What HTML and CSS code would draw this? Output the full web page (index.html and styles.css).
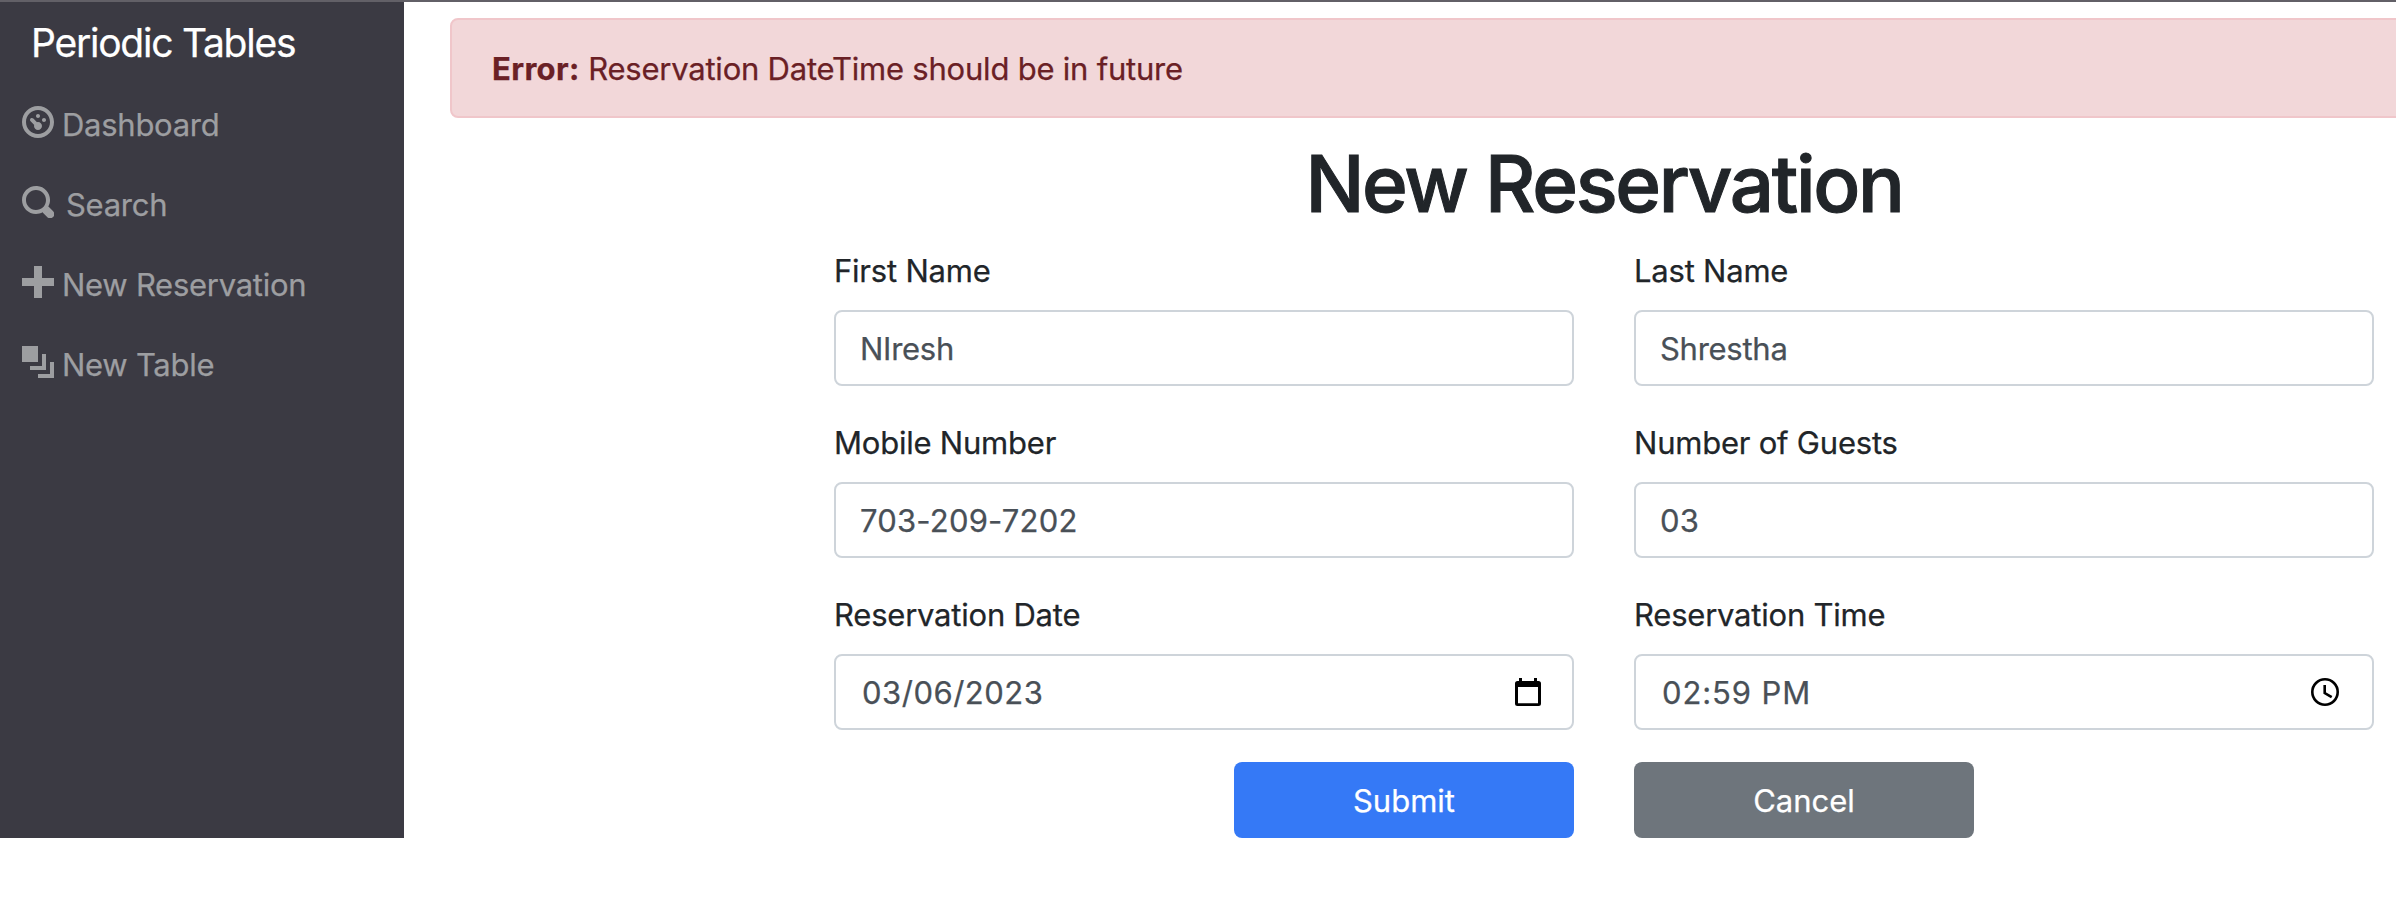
FILE: index.html
```html
<!DOCTYPE html>
<html lang="en">
<head>
<meta charset="utf-8">
<title>Periodic Tables</title>
<link rel="stylesheet" href="styles.css">
</head>
<body>
<div class="layout">
  <nav class="sidebar">
    <div class="brand">Periodic Tables</div>
    <a class="nav-link"><svg class="icon" viewBox="0 0 8 8"><path d="M4 0c-2.2 0-4 1.8-4 4s1.8 4 4 4 4-1.8 4-4-1.8-4-4-4zm0 1c1.66 0 3 1.34 3 3s-1.34 3-3 3-3-1.34-3-3 1.34-3 3-3zm0 1c-.28 0-.5.22-.5.5s.22.5.5.5.5-.22.5-.5-.22-.5-.5-.5zm-1.66 1a.5.5 0 0 0-.19.84l.91.91c-.02.08-.06.16-.06.25 0 .55.45 1 1 1s1-.45 1-1-.45-1-1-1c-.09 0-.17.04-.25.06l-.91-.91a.5.5 0 0 0-.44-.16.5.5 0 0 0-.06 0zm3.16 0c-.28 0-.5.22-.5.5s.22.5.5.5.5-.22.5-.5-.22-.5-.5-.5z"/></svg><span class="nav-text">Dashboard</span></a>
    <a class="nav-link"><svg class="icon" viewBox="0 0 8 8"><path d="M3.5 0c-1.93 0-3.5 1.57-3.5 3.5s1.57 3.5 3.5 3.5c.59 0 1.17-.14 1.66-.41a1 1 0 0 0 .13.13l1 1a1.02 1.02 0 1 0 1.44-1.44l-1-1a1 1 0 0 0-.16-.13c.27-.49.44-1.06.44-1.66 0-1.93-1.55-3.5-3.5-3.5zm0 1c1.39 0 2.5 1.11 2.5 2.5 0 .66-.24 1.27-.66 1.72-.01.01-.02.02-.03.03a1 1 0 0 0-.13.13c-.44.4-1.04.63-1.69.63-1.39 0-2.5-1.11-2.5-2.5s1.11-2.5 2.5-2.5z"/></svg><span class="nav-text spaced">Search</span></a>
    <a class="nav-link"><svg class="icon" viewBox="0 0 8 8"><path d="M3 0v3h-3v2h3v3h2v-3h3v-2h-3v-3h-2z"/></svg><span class="nav-text">New Reservation</span></a>
    <a class="nav-link"><svg class="icon" viewBox="0 0 8 8"><path d="M0 0v4h4v-4h-4zm5 2v3h-3v1h4v-4h-1zm2 2v3h-3v1h4v-4h-1z"/></svg><span class="nav-text">New Table</span></a>
  </nav>
  <main class="content">
    <div class="alert"><strong>Error:</strong> Reservation DateTime should be in future</div>
    <h1 class="title">New Reservation</h1>
    <form class="form">
      <div class="field"><label class="label">First Name</label><div class="control">NIresh</div></div>
      <div class="field"><label class="label">Last Name</label><div class="control">Shrestha</div></div>
      <div class="field"><label class="label">Mobile Number</label><div class="control digits">703-209-7202</div></div>
      <div class="field"><label class="label">Number of Guests</label><div class="control digits">03</div></div>
      <div class="field"><label class="label">Reservation Date</label><div class="control picker"><span class="date">03/06/2023</span><svg class="icon-date" viewBox="0 0 26 28"><path fill-rule="evenodd" d="M4 0h3v3h12V0h3v3h1.500a2.500 2.500 0 0 1 2.500 2.500v20a2.500 2.500 0 0 1-2.500 2.500h-21A2.500 2.500 0 0 1 0 25.500v-20A2.500 2.500 0 0 1 2.500 3H4zM3 9v16.200h20V9z"/></svg></div></div>
      <div class="field"><label class="label">Reservation Time</label><div class="control picker"><span class="time">02:59 PM</span><svg class="icon-time" viewBox="0 0 28 28"><circle cx="14" cy="14" r="12.700"/><path d="M13.700 7v8l7 4.200"/></svg></div></div>
      <div class="submit-cell"><button type="button" class="btn primary">Submit</button></div>
      <div><button type="button" class="btn secondary">Cancel</button></div>
    </form>
  </main>
</div>
</body>
</html>
```
FILE: styles.css
```css
* { box-sizing: border-box; }
body { margin: 0; height: 918px; overflow: hidden; background: #fff; border-top: 2px solid #626067; color: #212529; font: 400 31px/48px Inter, "Liberation Sans", sans-serif; letter-spacing: -0.27px; -webkit-text-stroke: 0.25px currentColor; }
.layout { display: flex; align-items: flex-start; }
.sidebar { flex: none; width: 404px; height: 836px; padding: 11px 22px 0; background: #3b3a43; color: #9d9ea1; }
.brand { height: 60px; padding: 0 0 0 9px; color: #fff; font-size: 39px; line-height: 60px; letter-spacing: -1.25px; white-space: nowrap; }
.nav-link { display: flex; align-items: center; height: 80px; padding-top: 2px; white-space: nowrap; }
.brand + .nav-link { margin-top: 10px; }
.icon { flex: none; width: 32px; height: 32px; margin: -5px 8px 0 0; fill: currentColor; }
.nav-text { padding-top: 2px; }
.nav-text.spaced { margin-left: 4px; }
.content { flex: none; width: 2000px; padding: 16px 0 0; }
.alert { height: 100px; margin: 0 0 16px 46px; padding: 25px 40px 0; border: 2px solid #f0c6ca; border-radius: 8px; background: #f2d7d9; color: #6a2025; letter-spacing: -0.22px; }
.alert strong { font-weight: 700; letter-spacing: 0.35px; }
.title { margin: 0 0 16px 400px; padding-top: 2px; height: 96px; font-size: 78px; font-weight: 500; line-height: 96px; text-align: center; letter-spacing: -2.35px; -webkit-text-stroke-width: 1px; }
.form { display: grid; grid-template-columns: 740px 740px; gap: 32px 60px; padding-left: 430px; }
.label { display: block; height: 48px; margin-bottom: 16px; padding-top: 1px; letter-spacing: -0.22px; }
.control { height: 76px; padding: 13px 24px 11px; border: 2px solid #ced4da; border-radius: 8px; color: #495057; background: #fff; }
.digits { letter-spacing: 0.2px; }
.date { letter-spacing: 0.5px; }
.time { letter-spacing: 0.9px; }
.picker { display: flex; align-items: center; justify-content: space-between; padding: 2px 31px 0 26px; }
.icon-date { width: 26px; height: 28px; margin-top: -3px; fill: #000; }
.icon-time { width: 28px; height: 28px; margin: -2px 2px 0 0; fill: none; stroke: #000; stroke-width: 2.600px; }
.submit-cell { display: flex; justify-content: flex-end; }
.btn { width: 340px; height: 76px; padding: 2px 0 0; border: 0; border-radius: 8px; color: #fff; font: inherit; letter-spacing: 0; }
.primary { background: #3579f6; }
.secondary { background: #6e757c; }
```
